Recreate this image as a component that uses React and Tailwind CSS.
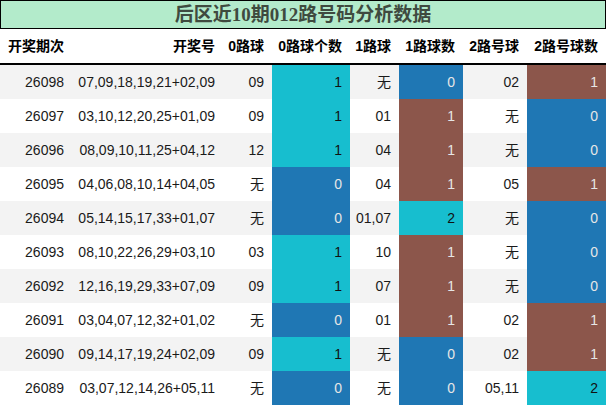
const rows = [
  ['26098', '07,09,18,19,21+02,09', '09', 1, '无', 0, '02', 1],
  ['26097', '03,10,12,20,25+01,09', '09', 1, '01', 1, '无', 0],
  ['26096', '08,09,10,11,25+04,12', '12', 1, '04', 1, '无', 0],
  ['26095', '04,06,08,10,14+04,05', '无', 0, '04', 1, '05', 1],
  ['26094', '05,14,15,17,33+01,07', '无', 0, '01,07', 2, '无', 0],
  ['26093', '08,10,22,26,29+03,10', '03', 1, '10', 1, '无', 0],
  ['26092', '12,16,19,29,33+07,09', '09', 1, '07', 1, '无', 0],
  ['26091', '03,04,07,12,32+01,02', '无', 0, '01', 1, '02', 1],
  ['26090', '09,14,17,19,24+02,09', '09', 1, '无', 0, '02', 1],
  ['26089', '03,07,12,14,26+05,11', '无', 0, '无', 0, '05,11', 2],
];

const headers = ['开奖期次', '开奖号', '0路球', '0路球个数', '1路球', '1路球数', '2路号球', '2路号球数'];

const grid = 'grid grid-cols-[72px_151px_49px_78px_49px_64px_64px_79px]';

// 0路球个数: 1 is cyan, 0 is blue. other count columns: 0 blue, 1 brown, 2 cyan
const zeroCell = (n) => (n === 1 ? 'bg-[#17becf] text-[#111]' : 'bg-[#1f77b4] text-[#e6e6e6]');
const countCell = (n) => {
  if (n === 2) return 'bg-[#17becf] text-[#111]';
  if (n === 1) return 'bg-[#8c564b] text-[#e6e6e6]';
  return 'bg-[#1f77b4] text-[#e6e6e6]';
};

export default function App() {
  return (
    <div
      className="w-[606px] h-[406px] bg-white overflow-hidden"
      style={{ fontFamily: '"Liberation Sans", "Noto Sans CJK SC", sans-serif' }}
    >
      <div className="h-[29px] border border-black bg-[#b3ebcb] flex items-center justify-center">
        <span
          className="text-[19px] font-bold text-[#3f4a3f] leading-none"
          style={{ fontFamily: '"Liberation Serif", "Noto Sans CJK SC", serif' }}
        >
          后区近10期012路号码分析数据
        </span>
      </div>

      <div className={`${grid} h-[36px] border-b-2 border-black text-[14px] font-bold text-black`}>
        {headers.map((h, i) => (
          <div
            key={h}
            className={`flex items-center whitespace-nowrap ${i === 0 ? 'justify-start pl-2' : 'justify-end pr-2'}`}
          >
            {h}
          </div>
        ))}
      </div>

      {rows.map((r, idx) => {
        const base = idx % 2 === 0 ? 'bg-[#f3f3f3]' : 'bg-white';
        return (
          <div key={r[0]} className={`${grid} h-[34px] text-[14px] text-[#1a1a1a] whitespace-nowrap ${base}`}>
            <div className="flex items-center justify-end pr-2">{r[0]}</div>
            <div className="flex items-center justify-end pr-2">{r[1]}</div>
            <div className="flex items-center justify-end pr-2">{r[2]}</div>
            <div className={`flex items-center justify-end pr-2 ${zeroCell(r[3])}`}>{r[3]}</div>
            <div className="flex items-center justify-end pr-2">{r[4]}</div>
            <div className={`flex items-center justify-end pr-2 ${countCell(r[5])}`}>{r[5]}</div>
            <div className="flex items-center justify-end pr-2">{r[6]}</div>
            <div className={`flex items-center justify-end pr-2 ${countCell(r[7])}`}>{r[7]}</div>
          </div>
        );
      })}
    </div>
  );
}
